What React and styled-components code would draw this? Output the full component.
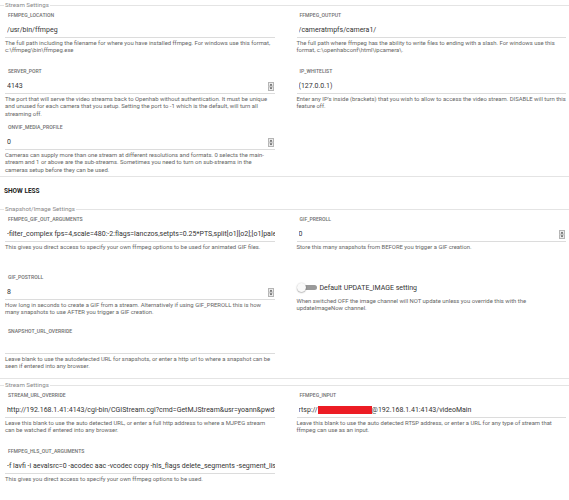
import React from 'react';
import styled, {createGlobalStyle} from 'styled-components';

const GlobalStyle = createGlobalStyle`
  body {
    margin: 0;
    background: #fff;
    font-family: Roboto, "Noto Sans", sans-serif;
  }
`;

const Page = styled.div`
  width: 569px;
  padding-top: 1px;
`;

const Section = styled.fieldset`
  margin: ${props => props.top || 0}px 0 0 0;
  padding: 3px 3px 0 5px;
  border: none;
  border-top: 1px solid #e4e4e4;
  border-bottom: 1px solid #e4e4e4;
  min-width: 0;
`;

const Legend = styled.legend`
  padding: 0 1px;
  margin-left: -1px;
  font-size: 6.2px;
  line-height: 8px;
  color: #8a8a8a;
`;

const Grid = styled.div`
  display: grid;
  grid-template-columns: minmax(0, 1fr) minmax(0, 1fr);
  grid-template-rows: ${props => props.rows || 'none'};
  grid-auto-rows: minmax(52px, auto);
  column-gap: 22px;
  row-gap: 4px;
`;

const Field = styled.div`
  display: flex;
  flex-direction: column;
  min-width: 0;
`;

const Label = styled.div`
  font-size: 5.1px;
  line-height: 6px;
  font-weight: 500;
  color: #6f6f6f;
  padding-left: 3px;
  text-transform: uppercase;
`;

const InputLine = styled.div`
  display: flex;
  align-items: center;
  height: 14px;
  margin-top: 5px;
  padding-left: 2px;
  border-bottom: 1px solid #dcdcdc;
  font-size: 7px;
  color: #333;
  white-space: nowrap;
  overflow: hidden;
`;

const Value = styled.span`
  flex: 1;
  min-width: 0;
  overflow: hidden;
  text-overflow: clip;
`;

const Redacted = styled.span`
  display: inline-block;
  width: 54px;
  height: 9px;
  background: #ec1c24;
  vertical-align: middle;
  margin-top: -1px;
`;

const Spinner = styled.span`
  display: flex;
  flex: none;
  width: 6px;
  height: 9px;
  margin-right: 1px;
`;

const Desc = styled.div`
  margin-top: 2px;
  font-size: 5.9px;
  line-height: 7.4px;
  color: #666;
`;

const ShowLess = styled.div`
  padding: 10px 4px;
  font-size: 6.5px;
  line-height: 8px;
  font-weight: 700;
  color: #222;
`;

const ToggleRow = styled.div`
  display: flex;
  align-items: center;
  gap: 3px;
  margin-top: 9px;
  height: 9px;
  font-size: 7px;
  color: #333;
`;

const Track = styled.span`
  position: relative;
  flex: none;
  width: 20px;
  height: 9px;
  &::before {
    content: '';
    position: absolute;
    left: 6px;
    right: 0;
    top: 2px;
    height: 5px;
    border-radius: 3px;
    background: #9a9a9a;
  }
  &::after {
    content: '';
    position: absolute;
    left: 0;
    top: 0;
    width: 9px;
    height: 9px;
    border-radius: 50%;
    background: #fafafa;
    box-shadow: 0 0.5px 1.5px rgba(0, 0, 0, 0.45);
  }
`;

const ToggleDesc = styled(Desc)`
  margin-top: 6px;
`;

function SpinIcon() {
  return (
    <Spinner>
      <svg width="6" height="9" viewBox="0 0 6 9">
        <rect x="0.5" y="0.5" width="5" height="8" fill="#ececec" stroke="#b5b5b5" />
        <line x1="0.5" y1="4.5" x2="5.5" y2="4.5" stroke="#c8c8c8" />
        <path d="M1.6 3.4 L3 1.8 L4.4 3.4 Z" fill="#333" />
        <path d="M1.6 5.6 L3 7.2 L4.4 5.6 Z" fill="#333" />
      </svg>
    </Spinner>
  );
}

function Param({label, value, number, desc, children}) {
  return (
    <Field>
      <Label>{label}</Label>
      <InputLine>
        <Value>{children || value}</Value>
        {number ? <SpinIcon /> : null}
      </InputLine>
      <Desc>{desc}</Desc>
    </Field>
  );
}

function Toggle({label, desc}) {
  return (
    <Field>
      <ToggleRow>
        <Track />
        <span>{label}</span>
      </ToggleRow>
      <ToggleDesc>{desc}</ToggleDesc>
    </Field>
  );
}

export default function App() {
  return (
    <Page>
      <GlobalStyle />
      <Section>
        <Legend>Stream Settings</Legend>
        <Grid>
          <Param
            label="FFMPEG_LOCATION"
            value="/usr/bin/ffmpeg"
            desc="The full path including the filename for where you have installed ffmpeg. For windows use this format, c:\ffmpeg\bin\ffmpeg.exe"
          />
          <Param
            label="FFMPEG_OUTPUT"
            value="/cameratmpfs/camera1/"
            desc="The full path where ffmpeg has the ability to write files to ending with a slash. For windows use this format, c:\openhabconf\html\ipcamera\."
          />
          <Param
            label="SERVER_PORT"
            value="4143"
            number
            desc="The port that will serve the video streams back to Openhab without authentication. It must be unique and unused for each camera that you setup. Setting the port to -1 which is the default, will turn all streaming off."
          />
          <Param
            label="IP_WHITELIST"
            value="(127.0.0.1)"
            desc="Enter any IP's inside (brackets) that you wish to allow to access the video stream. DISABLE will turn this feature off."
          />
          <Param
            label="ONVIF_MEDIA_PROFILE"
            value="0"
            number
            desc="Cameras can supply more than one stream at different resolutions and formats. 0 selects the main-stream and 1 or above are the sub-streams. Sometimes you need to turn on sub-streams in the cameras setup before they can be used."
          />
        </Grid>
      </Section>

      <ShowLess>SHOW LESS</ShowLess>

      <Section>
        <Legend>Snapshot/Image Settings</Legend>
        <Grid rows="54px 50px 50px">
          <Param
            label="FFMPEG_GIF_OUT_ARGUMENTS"
            value="-filter_complex fps=4,scale=480:-2:flags=lanczos,setpts=0.25*PTS,split[o1][o2];[o1]palettegen[p];[o2]fifo[o3];[o3][p]paletteuse"
            desc="This gives you direct access to specify your own ffmpeg options to be used for animated GIF files."
          />
          <Param
            label="GIF_PREROLL"
            value="0"
            number
            desc="Store this many snapshots from BEFORE you trigger a GIF creation."
          />
          <Param
            label="GIF_POSTROLL"
            value="8"
            number
            desc="How long in seconds to create a GIF from a stream. Alternatively if using GIF_PREROLL this is how many snapshots to use AFTER you trigger a GIF creation."
          />
          <Toggle
            label="Default UPDATE_IMAGE setting"
            desc="When switched OFF the image channel will NOT update unless you override this with the updateImageNow channel."
          />
          <Param
            label="SNAPSHOT_URL_OVERRIDE"
            value=""
            desc="Leave blank to use the autodetected URL for snapshots, or enter a http url to where a snapshot can be seen if entered into any browser."
          />
        </Grid>
      </Section>

      <Section top={2}>
        <Legend>Stream Settings</Legend>
        <Grid>
          <Param
            label="STREAM_URL_OVERRIDE"
            value="http://192.168.1.41:4143/cgi-bin/CGIStream.cgi?cmd=GetMJStream&usr=yoann&pwd=camera"
            desc="Leave this blank to use the auto detected URL, or enter a full http address to where a MJPEG stream can be watched if entered into any browser."
          />
          <Param
            label="FFMPEG_INPUT"
            desc="Leave this blank to use the auto detected RTSP address, or enter a URL for any type of stream that ffmpeg can use as an input."
          >
            rtsp://<Redacted />@192.168.1.41:4143/videoMain
          </Param>
          <Param
            label="FFMPEG_HLS_OUT_ARGUMENTS"
            value="-f lavfi -i aevalsrc=0 -acodec aac -vcodec copy -hls_flags delete_segments -segment_list_flags live"
            desc="This gives you direct access to specify your own ffmpeg options to be used."
          />
        </Grid>
      </Section>
    </Page>
  );
}
